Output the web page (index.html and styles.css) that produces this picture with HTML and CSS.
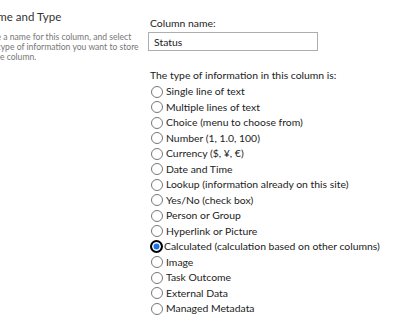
FILE: index.html
```html
<!DOCTYPE html>
<html lang="en">
<head>
    <meta charset="UTF-8">
    <title>Name and Type</title>
    <link rel="stylesheet" href="styles.css">
</head>
<body>
    <div class="section">
        <div class="side">
            <h3>Name and Type</h3>
            <p>Type a name for this column, and select<br>the type of information you want to store<br>in the column.</p>
        </div>
        <div class="main">
            <label class="field-label" for="colName">Column name:</label>
            <input type="text" id="colName" class="name-input" value="Status">
            <div class="type-label">The type of information in this column is:</div>
            <div class="types">
                <label class="opt"><span class="radio"></span>Single line of text</label>
                <label class="opt"><span class="radio"></span>Multiple lines of text</label>
                <label class="opt"><span class="radio"></span>Choice (menu to choose from)</label>
                <label class="opt"><span class="radio"></span>Number (1, 1.0, 100)</label>
                <label class="opt"><span class="radio"></span>Currency ($, ¥, €)</label>
                <label class="opt"><span class="radio"></span>Date and Time</label>
                <label class="opt"><span class="radio"></span>Lookup (information already on this site)</label>
                <label class="opt"><span class="radio"></span>Yes/No (check box)</label>
                <label class="opt"><span class="radio"></span>Person or Group</label>
                <label class="opt"><span class="radio"></span>Hyperlink or Picture</label>
                <label class="opt selected"><span class="radio"></span>Calculated (calculation based on other columns)</label>
                <label class="opt"><span class="radio"></span>Image</label>
                <label class="opt"><span class="radio"></span>Task Outcome</label>
                <label class="opt"><span class="radio"></span>External Data</label>
                <label class="opt"><span class="radio"></span>Managed Metadata</label>
            </div>
        </div>
    </div>
</body>
</html>
```

FILE: styles.css
```css
body {
    margin: 0;
    background: #fff;
    font-family: Lato, "Open Sans", sans-serif;
    color: #222;
    overflow: hidden;
}
.section {
    display: flex;
    margin-left: -17px;
    padding-top: 9px;
}
.side {
    width: 158px;
    flex-shrink: 0;
}
.side h3 {
    margin: 0;
    font-size: 11.5px;
    font-weight: normal;
    color: #333;
    line-height: 16px;
}
.side p {
    margin: 7px 0 0;
    font-size: 8.6px;
    line-height: 10px;
    color: #777;
    white-space: nowrap;
    overflow: hidden;
}
.main {
    margin-left: 8px;
    padding-top: 7px;
    font-size: 10.4px;
    line-height: 15px;
}
.field-label {
    display: block;
    margin-left: 1px;
}
.name-input {
    display: block;
    width: 170px;
    height: 19px;
    box-sizing: border-box;
    margin: 1px 0 0 -1px;
    padding: 0 5px;
    border: 1px solid #adadad;
    font: inherit;
    color: #222;
}
.type-label {
    margin-top: 17px;
    margin-left: 1px;
}
.types {
    margin-top: 1px;
    margin-left: 2px;
}
.opt {
    display: flex;
    align-items: center;
    height: 15.5px;
    white-space: nowrap;
}
.radio {
    width: 10px;
    height: 10px;
    border: 1px solid #777;
    border-radius: 50%;
    margin-right: 3px;
    flex-shrink: 0;
}
.selected .radio {
    border: 2px solid #000;
    width: 9px;
    height: 9px;
    margin-left: -1px;
    margin-right: 1px;
    background: #1a73e8;
    box-shadow: inset 0 0 0 1.5px #fff;
}
```
